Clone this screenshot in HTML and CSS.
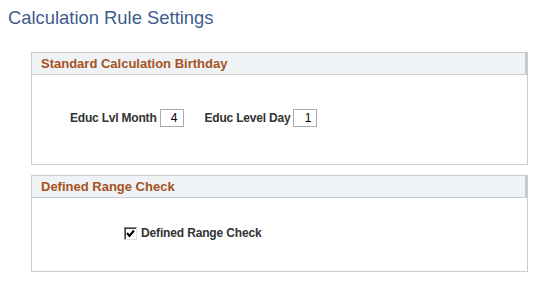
FILE: index.html
```html
<!DOCTYPE html>
<html>
<head>
<meta charset="utf-8">
<link rel="stylesheet" href="styles.css">
</head>
<body>
<h1 class="title">Calculation Rule Settings</h1>
<section class="group group-birthday">
  <div class="group-head">Standard Calculation Birthday</div>
  <div class="group-body fields">
    <label class="field-label">Educ Lvl Month</label>
    <span class="input">4</span>
    <label class="field-label second">Educ Level Day</label>
    <span class="input">1</span>
  </div>
</section>
<section class="group group-range">
  <div class="group-head">Defined Range Check</div>
  <div class="group-body check-row">
    <span class="checkbox"><svg width="9" height="9" viewBox="0 0 9 9"><path d="M1 4 L3.5 7 L8 1.5" fill="none" stroke="#000" stroke-width="2"/></svg></span>
    <span class="check-label">Defined Range Check</span>
  </div>
</section>
</body>
</html>
```

FILE: styles.css
```css
html, body {
  margin: 0;
  padding: 0;
  background: #fff;
  font-family: Arial, "Liberation Sans", sans-serif;
}
.title {
  margin: 0;
  padding: 7px 0 0 8px;
  height: 52px;
  box-sizing: border-box;
  font-size: 18.4px;
  font-weight: normal;
  color: #3f5d8d;
  line-height: 22px;
}
.group {
  margin-left: 31px;
  width: 497px;
  box-sizing: border-box;
  border: 1px solid #c9cdd1;
}
.group-birthday {
  height: 113px;
}
.group-range {
  margin-top: 10px;
  height: 97px;
}
.group-head {
  height: 22px;
  box-sizing: border-box;
  background: #eff3f5;
  border-bottom: 1px solid #c9cdd1;
  border-right: 2px solid #c4c8cc;
  color: #a5521e;
  font-weight: bold;
  font-size: 13px;
  line-height: 21px;
  padding-left: 9px;
}
.fields {
  display: flex;
  align-items: center;
  padding: 34px 0 0 38px;
  font-size: 12px;
  font-weight: bold;
  color: #333;
}
.field-label {
  margin-right: 3px;
  letter-spacing: -0.2px;
}
.field-label.second {
  margin-left: 21px;
}
.input {
  width: 24px;
  height: 18px;
  box-sizing: border-box;
  border: 1px solid #a8acb0;
  text-align: right;
  padding-right: 5px;
  font-weight: normal;
  font-size: 12px;
  line-height: 16px;
  color: #000;
}
.check-row {
  display: flex;
  align-items: center;
  padding: 28px 0 0 92px;
  font-size: 12px;
  font-weight: bold;
  color: #333;
}
.check-label {
  letter-spacing: -0.15px;
}
.checkbox {
  width: 13px;
  height: 13px;
  box-sizing: border-box;
  border: 1px solid;
  border-color: #808080 #e0e0e0 #e0e0e0 #808080;
  box-shadow: inset 1px 1px 0 #404040;
  background: #fff;
  display: flex;
  align-items: center;
  justify-content: center;
  margin-right: 4px;
}
```
